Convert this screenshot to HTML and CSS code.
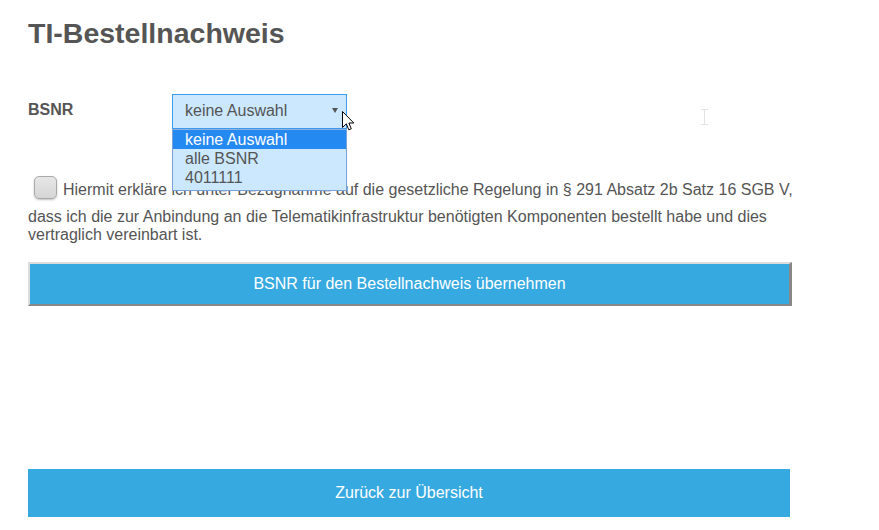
FILE: index.html
```html
<!DOCTYPE html>
<html lang="de">
<head>
<meta charset="utf-8">
<title>TI-Bestellnachweis</title>
<link rel="stylesheet" href="styles.css">
</head>
<body>
<main class="page">
  <h1 class="title">TI-Bestellnachweis</h1>

  <div class="field-row">
    <label class="field-label">BSNR</label>
    <div class="select-wrap">
      <div class="select">keine Auswahl<span class="caret"></span></div>
      <ul class="dropdown">
        <li class="option option-active">keine Auswahl</li>
        <li class="option">alle BSNR</li>
        <li class="option">4011111</li>
      </ul>
      <svg class="cursor-arrow" width="13" height="20" viewBox="0 0 13 20">
        <path d="M0.5 0.5 L0.5 16.5 L4.3 12.8 L6.8 18.8 L9.3 17.8 L6.9 12 L11.8 12 Z" fill="#fff" stroke="#000" stroke-width="1" stroke-linejoin="miter"/>
      </svg>
    </div>
    <svg class="cursor-ibeam" width="7" height="16" viewBox="0 0 7 16">
      <path d="M0 0.5 H7 M3.5 0.5 V15.5 M0 15.5 H7" stroke="#e2e2e2" stroke-width="1" fill="none"/>
    </svg>
  </div>

  <p class="consent"><span class="checkbox"></span>Hiermit erkläre ich unter Bezugnahme auf die gesetzliche Regelung in § 291 Absatz 2b Satz 16 SGB V,<br>dass ich die zur Anbindung an die Telematikinfrastruktur benötigten Komponenten bestellt habe und dies<br>vertraglich vereinbart ist.</p>

  <button class="btn btn-submit" type="button">BSNR für den Bestellnachweis übernehmen</button>

  <button class="btn btn-back" type="button">Zurück zur Übersicht</button>
</main>
</body>
</html>
```

FILE: styles.css
```css
html, body {
  margin: 0;
  padding: 0;
  background: #fff;
}

body {
  font-family: "Liberation Sans", Arial, sans-serif;
  color: #555;
  font-size: 16px;
}

.page {
  width: 764px;
  padding: 17px 28px 0;
}

.title {
  margin: 0;
  font-size: 28.5px;
  line-height: 32px;
  font-weight: bold;
  color: #555;
}

.field-row {
  position: relative;
  display: flex;
  align-items: flex-start;
  margin-top: 45px;
}

.field-label {
  width: 144px;
  padding-top: 7px;
  font-weight: bold;
  font-size: 16px;
  line-height: 18px;
  color: #555;
}

.select-wrap {
  position: relative;
  width: 175px;
}

.select {
  position: relative;
  box-sizing: border-box;
  height: 35px;
  padding-left: 12px;
  border: 1px solid #3d9bec;
  background: #cce8ff;
  line-height: 31px;
  color: #555;
}

.caret {
  position: absolute;
  right: 8px;
  top: 13px;
  width: 0;
  height: 0;
  border-left: 3px solid transparent;
  border-right: 3px solid transparent;
  border-top: 5px solid #555;
}

.dropdown {
  position: absolute;
  top: 35px;
  left: 0;
  box-sizing: border-box;
  width: 175px;
  margin: 0;
  padding: 0 0 3px;
  list-style: none;
  border: 1px solid #7ba2d8;
  border-top-color: #8fb0dc;
  background: #cce8ff;
  z-index: 2;
}

.option {
  height: 19px;
  line-height: 19px;
  padding-left: 12px;
  color: #555;
}

.option-active {
  background: #2589f2;
  color: #fff;
}

.cursor-arrow {
  position: absolute;
  left: 170px;
  top: 17px;
  z-index: 3;
}

.cursor-ibeam {
  position: absolute;
  left: 673px;
  top: 15px;
}

.consent {
  width: 790px;
  margin: 47px 0 0;
  font-size: 16px;
  line-height: 18px;
  color: #555;
}

.checkbox {
  display: inline-block;
  box-sizing: border-box;
  width: 23px;
  height: 23px;
  margin: 0 6px 9px 6px;
  vertical-align: -13px;
  border: 1px solid #a9a9a9;
  border-radius: 5px;
  background: linear-gradient(#e6e6e6, #d6d6d6);
  box-shadow: 0 1px 2px rgba(0, 0, 0, 0.25);
}

.btn {
  display: block;
  box-sizing: border-box;
  margin: 0;
  padding: 0;
  font-family: "Liberation Sans", Arial, sans-serif;
  font-size: 16px;
  color: #fff;
  background: #36a9e0;
  text-align: center;
  cursor: pointer;
  -webkit-appearance: none;
  appearance: none;
}

.btn-submit {
  width: 764px;
  height: 44px;
  margin-top: 18px;
  border-style: solid;
  border-width: 2px 3px 2px 2px;
  border-color: #dcdcdc #888 #888 #dcdcdc;
}

.btn-back {
  width: 762px;
  height: 48px;
  margin-top: 163px;
  border: none;
}
```
